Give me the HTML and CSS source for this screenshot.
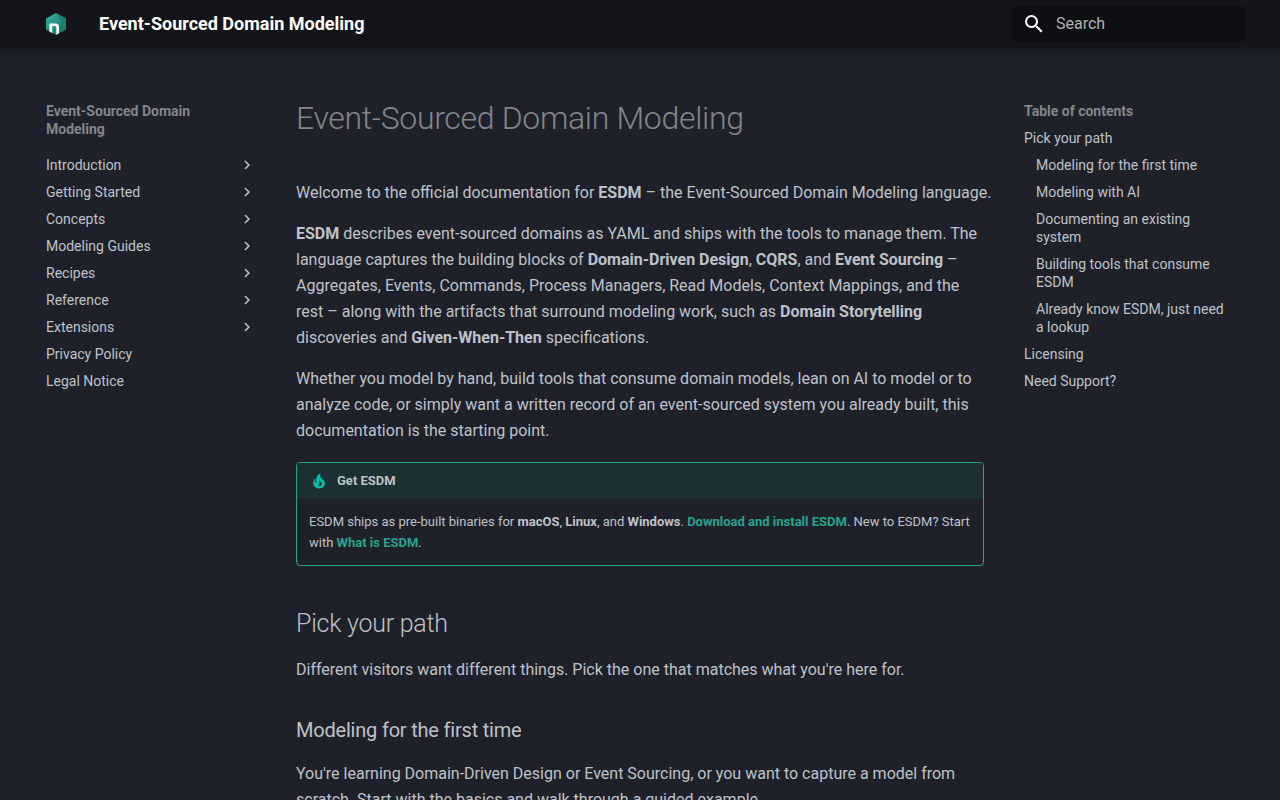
FILE: index.html
```html
<!DOCTYPE html>
<html lang="en">
<head>
<meta charset="utf-8">
<meta name="viewport" content="width=device-width, initial-scale=1">
<title>Event-Sourced Domain Modeling</title>
<link rel="stylesheet" href="styles.css">
</head>
<body>
<svg width="0" height="0" class="sprite" aria-hidden="true">
  <symbol id="chevron" viewBox="0 0 24 24"><path d="M8.59 16.58 13.17 12 8.59 7.41 10 6l6 6-6 6z"/></symbol>
</svg>
<header class="header">
  <div class="header-inner">
    <a class="logo" href="#" aria-label="Home">
      <svg viewBox="0 0 24 24" width="24" height="24" aria-hidden="true">
        <defs>
          <linearGradient id="hex" x1="0" y1="0" x2="1" y2="1">
            <stop offset="0" stop-color="#35b5a0"/>
            <stop offset=".5" stop-color="#27917f"/>
            <stop offset="1" stop-color="#15685b"/>
          </linearGradient>
        </defs>
        <path fill="url(#hex)" d="M12 1 22 6.500V17.500L12 23 2 17.500V6.500z"/>
        <path fill="#1c7c6c" d="M12 1 22 6.500V17.500L17 20.200V10z" opacity=".7"/>
        <path fill="#fff" d="M5.400 11.500h6.100q3.500 0 3.500 3.500v6.300l-2.700 1.500v-7.300q0-1.500-1.500-1.500H8.200v7l-2.800-1.600z"/>
      </svg>
    </a>
    <a class="site-title" href="#">Event-Sourced Domain Modeling</a>
    <form class="search" role="search">
      <label for="q" class="search-icon">
        <svg viewBox="0 0 24 24" width="24" height="24" aria-hidden="true"><path d="M9.500 3A6.500 6.500 0 0 1 16 9.500c0 1.610-.59 3.090-1.560 4.230l.27.27h.79l5 5-1.500 1.500-5-5v-.79l-.27-.27A6.516 6.516 0 0 1 9.500 16 6.500 6.500 0 0 1 3 9.500 6.500 6.500 0 0 1 9.500 3m0 2C7 5 5 7 5 9.500S7 14 9.500 14 14 12 14 9.500 12 5 9.500 5"/></svg>
      </label>
      <input id="q" class="search-input" type="text" placeholder="Search" aria-label="Search">
    </form>
  </div>
</header>
<div class="layout">
  <nav class="sidebar" aria-label="Site">
    <p class="nav-title">Event-Sourced Domain Modeling</p>
    <ul class="nav-list nav-list-main">
      <li><a href="#">Introduction<svg class="chevron"><use href="#chevron"/></svg></a></li>
      <li><a href="#">Getting Started<svg class="chevron"><use href="#chevron"/></svg></a></li>
      <li><a href="#">Concepts<svg class="chevron"><use href="#chevron"/></svg></a></li>
      <li><a href="#">Modeling Guides<svg class="chevron"><use href="#chevron"/></svg></a></li>
      <li><a href="#">Recipes<svg class="chevron"><use href="#chevron"/></svg></a></li>
      <li><a href="#">Reference<svg class="chevron"><use href="#chevron"/></svg></a></li>
      <li><a href="#">Extensions<svg class="chevron"><use href="#chevron"/></svg></a></li>
      <li><a href="#">Privacy Policy</a></li>
      <li><a href="#">Legal Notice</a></li>
    </ul>
  </nav>
  <main class="content">
    <h1>Event-Sourced Domain Modeling</h1>
    <p class="intro">Welcome to the official documentation for <strong>ESDM</strong> – the Event-Sourced Domain Modeling language.</p>
    <p><strong>ESDM</strong> describes event-sourced domains as YAML and ships with the tools to manage them. The language captures the building blocks of <strong>Domain-Driven Design</strong>, <strong>CQRS</strong>, and <strong>Event Sourcing</strong> – Aggregates, Events, Commands, Process Managers, Read Models, Context Mappings, and the rest – along with the artifacts that surround modeling work, such as <strong>Domain Storytelling</strong> discoveries and <strong>Given-When-Then</strong> specifications.</p>
    <p>Whether you model by hand, build tools that consume domain models, lean on AI to model or to analyze code, or simply want a written record of an event-sourced system you already built, this documentation is the starting point.</p>
    <aside class="tip">
      <div class="tip-title">
        <svg viewBox="0 0 24 24" width="20" height="20" aria-hidden="true"><path d="M17.660 11.200c-.23-.3-.51-.56-.77-.82-.67-.6-1.430-1.030-2.070-1.660C13.330 7.260 13 4.850 13.950 3c-.95.23-1.780.75-2.490 1.320-2.590 2.080-3.610 5.750-2.390 8.900.04.1.08.2.08.33 0 .22-.15.42-.35.5-.23.1-.47.04-.66-.12a.6.6 0 0 1-.14-.17c-1.130-1.430-1.310-3.480-.55-5.120C5.780 10 4.870 12.300 5 14.470c.06.5.12 1 .29 1.500.14.6.41 1.200.71 1.730 1.080 1.730 2.950 2.970 4.960 3.220 2.140.27 4.430-.12 6.070-1.600 1.830-1.660 2.470-4.320 1.530-6.600l-.13-.26c-.21-.46-.77-1.260-.77-1.260m-3.160 6.300c-.28.24-.74.5-1.100.6-1.120.4-2.240-.16-2.900-.82 1.190-.28 1.900-1.160 2.110-2.050.17-.8-.15-1.460-.28-2.230-.12-.74-.1-1.370.17-2.060.19.38.39.76.63 1.060.77 1 1.980 1.440 2.240 2.800.04.14.06.28.06.43.03.82-.33 1.720-.93 2.270"/></svg>
        Get ESDM
      </div>
      <p class="tip-body">ESDM ships as pre-built binaries for <strong>macOS</strong>, <strong>Linux</strong>, and <strong>Windows</strong>. <a href="#">Download and install ESDM</a>. New to ESDM? Start with <a href="#">What is ESDM</a>.</p>
    </aside>
    <h2 id="pick">Pick your path</h2>
    <p>Different visitors want different things. Pick the one that matches what you're here for.</p>
    <h3 id="first">Modeling for the first time</h3>
    <p>You're learning Domain-Driven Design or Event Sourcing, or you want to capture a model from scratch. Start with the basics and walk through a guided example.</p>
  </main>
  <nav class="sidebar" aria-label="Table of contents">
    <p class="nav-title">Table of contents</p>
    <ul class="nav-list">
      <li><a href="#pick">Pick your path</a>
        <ul class="nav-list nav-list-nested">
          <li><a href="#first">Modeling for the first time</a></li>
          <li><a href="#">Modeling with AI</a></li>
          <li><a href="#">Documenting an existing system</a></li>
          <li><a href="#">Building tools that consume ESDM</a></li>
          <li><a href="#">Already know ESDM, just need a lookup</a></li>
        </ul>
      </li>
      <li><a href="#">Licensing</a></li>
      <li><a href="#">Need Support?</a></li>
    </ul>
  </nav>
</div>
</body>
</html>
```
FILE: styles.css
```css
:root {
  --bg: #1e2129;
  --header: #14151a;
  --fg: #bfc1c9;
  --fg-light: #83858c;
  --accent: #26a48f;
}

* { box-sizing: border-box; }

html { scrollbar-width: none; }

body {
  margin: 0;
  background: var(--bg);
  color: var(--fg);
  font-family: Roboto, "Liberation Sans", sans-serif;
  font-size: 16px;
  line-height: 26px;
  -webkit-font-smoothing: antialiased;
}

a { text-decoration: none; }

.sprite { position: absolute; }

.header {
  position: sticky;
  top: 0;
  z-index: 2;
  background: var(--header);
  box-shadow: 0 0 4px rgba(0, 0, 0, .1), 0 4px 8px rgba(0, 0, 0, .2);
}

.header-inner {
  display: flex;
  align-items: center;
  max-width: 1220px;
  height: 48px;
  margin: 0 auto;
  padding: 0 5px 0 14px;
}

.logo {
  display: flex;
  margin-right: 31px;
}

.site-title {
  flex: 1;
  color: #fff;
  font-size: 18px;
  font-weight: 700;
}

.search {
  display: flex;
  align-items: center;
  width: 233px;
  height: 36px;
  padding: 0 10px;
  border-radius: 2px;
  background: #0e0f13;
}

.search-icon {
  display: flex;
  margin-right: 10px;
  fill: #fff;
}

.search-input {
  flex: 1;
  min-width: 0;
  padding: 0;
  border: 0;
  outline: 0;
  background: none;
  color: #fff;
  font: inherit;
}

.search-input::placeholder {
  color: #b1b1b3;
  opacity: 1;
}

.layout {
  display: grid;
  grid-template-columns: 242px minmax(0, 1fr) 242px;
  max-width: 1220px;
  margin: 0 auto;
  padding-top: 49px;
}

.sidebar {
  padding: 5px 16px;
  font-size: 14px;
  line-height: 18px;
}

.nav-title {
  margin: 0;
  padding-right: 16px;
  color: var(--fg-light);
  font-weight: 700;
}

.nav-list {
  display: grid;
  gap: 9px;
  margin: 9px 0 0;
  padding: 0;
  list-style: none;
}

.nav-list-main { margin-top: 18px; }

.nav-list-nested { padding-left: 12px; }

.nav-list a {
  display: flex;
  align-items: center;
  justify-content: space-between;
  color: var(--fg);
}

.chevron {
  width: 18px;
  height: 18px;
  fill: currentColor;
}

.content { padding: 0 24px 24px; }

h1, h2, h3 { margin: 0; }

h1 {
  margin-bottom: 41px;
  color: var(--fg-light);
  font-size: 32px;
  font-weight: 300;
  line-height: 42px;
  letter-spacing: -.01em;
}

h2 {
  margin: 40px 0 16px;
  font-size: 25px;
  font-weight: 300;
  line-height: 35px;
  letter-spacing: -.01em;
}

h3 {
  margin: 32px 0 16px;
  font-size: 20px;
  font-weight: 400;
  line-height: 30px;
  letter-spacing: -.01em;
}

p { margin: 0 0 15px; }

.intro { margin-right: -8px; }

.tip {
  margin-top: 18px;
  overflow: hidden;
  border: 1px solid var(--accent);
  border-radius: 4px;
  font-size: 13px;
  line-height: 21px;
}

.tip-title {
  display: flex;
  align-items: center;
  gap: 8px;
  padding: 8px 12px;
  background: #1c2f33;
  font-weight: 700;
  line-height: 20px;
}

.tip-title svg { fill: #00bfa5; }

.tip-body {
  margin: 0;
  padding: 12px;
}

.tip-body a {
  color: var(--accent);
  font-weight: 700;
}
```
